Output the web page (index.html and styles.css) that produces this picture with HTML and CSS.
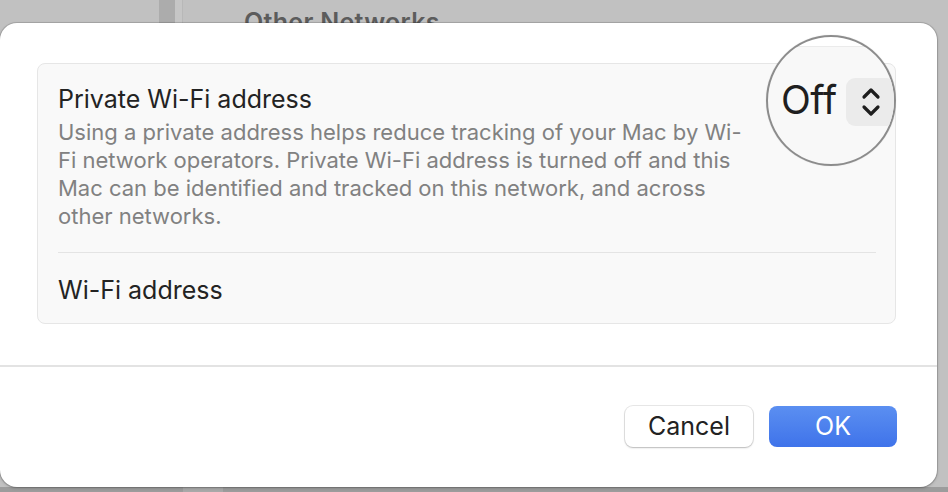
FILE: index.html
```html
<!DOCTYPE html>
<html>
<head>
<meta charset="utf-8">
<link rel="stylesheet" href="styles.css">
</head>
<body>
<div class="desktop">
  <div class="backdrop">
    <div class="sidebar-edge"></div>
    <div class="bg-title">Other Networks</div>
  </div>
  <div class="dialog">
    <div class="dialog-body">
      <div class="card">
        <div class="row row-main">
          <div class="row-text">
            <div class="row-title">Private Wi-Fi address</div>
            <div class="row-desc">Using a private address helps reduce tracking of your Mac by Wi-<br>Fi network operators. Private Wi-Fi address is turned off and this<br>Mac can be identified and tracked on this network, and across<br>other networks.</div>
          </div>
        </div>
        <div class="row row-second">
          <div class="row-title">Wi-Fi address</div>
        </div>
      </div>
    </div>
    <div class="dialog-footer">
      <button class="btn btn-cancel">Cancel</button>
      <button class="btn btn-ok">OK</button>
    </div>
    <div class="magnifier">
      <span class="mag-value">Off</span>
      <span class="mag-stepper">
        <svg width="22" height="34" viewBox="0 0 22 34" fill="none" stroke="#1e1e1e" stroke-width="3.2" stroke-linecap="round" stroke-linejoin="round">
          <path d="M4 12 L11 5 L18 12"/>
          <path d="M4 22 L11 29 L18 22"/>
        </svg>
      </span>
    </div>
  </div>
  <div class="bottom-strip"><div class="strip-light"></div></div>
</div>
</body>
</html>
```

FILE: styles.css
```css
* { box-sizing: border-box; }
html, body {
  margin: 0;
  padding: 0;
  width: 948px;
  height: 492px;
  overflow: hidden;
  background: #c1c1c1;
  font-family: Inter, "Noto Sans", "Liberation Sans", sans-serif;
}
.desktop {
  position: relative;
  width: 948px;
  height: 492px;
  padding-top: 23px;
}
.backdrop {
  position: absolute;
  left: 0;
  top: 0;
  width: 948px;
  height: 492px;
  z-index: 0;
}
.sidebar-edge {
  position: absolute;
  left: 159px;
  top: 0;
  width: 24px;
  height: 492px;
  background: linear-gradient(to right, #acacac 0, #acacac 16px, #c6c6c6 16px, #c6c6c6 23px, #b8b8b8 23px);
}
.bg-title {
  position: absolute;
  left: 244px;
  top: 7px;
  font-size: 25px;
  font-weight: 600;
  color: #5c5c5c;
  letter-spacing: 0.3px;
}
.dialog {
  position: relative;
  z-index: 1;
  width: 937px;
  height: 464px;
  background: #ffffff;
  border-radius: 17px;
  box-shadow: 0 0 0 1px rgba(0,0,0,0.12), 0 1px 3px rgba(0,0,0,0.25);
  display: flex;
  flex-direction: column;
}
.dialog-body {
  padding: 40px 41px 41px 37px;
  border-bottom: 2px solid #e3e3e3;
}
.card {
  background: #f9f9f9;
  border: 1px solid #e6e6e6;
  border-radius: 8px;
  height: 261px;
  padding: 0 19px 0 20px;
}
.row-main {
  padding-top: 21px;
  height: 189px;
  border-bottom: 1px solid #e4e4e4;
}
.row-title {
  font-size: 25px;
  color: #232323;
  line-height: 28px;
}
.row-desc {
  margin-top: 5px;
  font-size: 22px;
  line-height: 28px;
  color: #818181;
}
.row-second {
  padding-top: 23px;
}
.dialog-footer {
  display: flex;
  justify-content: flex-end;
  gap: 16px;
  padding: 39px 40px 0 0;
}
.btn {
  width: 128px;
  height: 41px;
  border-radius: 8px;
  font-family: inherit;
  font-size: 25px;
  border: none;
  padding: 0;
  line-height: 41px;
}
.btn-cancel {
  background: #ffffff;
  color: #222222;
  box-shadow: 0 0 0 1px rgba(0,0,0,0.09), 0 1px 2px rgba(0,0,0,0.2);
}
.btn-ok {
  background: linear-gradient(to bottom, #5b8ff1, #3f73ea);
  color: #ffffff;
}
.magnifier {
  position: absolute;
  left: 766px;
  top: 12px;
  width: 130px;
  height: 131px;
  border-radius: 50%;
  border: 2px solid #8c8c8c;
  background: linear-gradient(to bottom, #ffffff 0, #ffffff 9px, #ebebeb 9px, #ebebeb 10px, #f8f8f8 10px);
  overflow: hidden;
  display: flex;
  align-items: center;
  padding-left: 13px;
  box-shadow: 0 0 1px rgba(0,0,0,0.2);
}
.mag-value {
  font-size: 39px;
  color: #1f1f1f;
  letter-spacing: -0.5px;
  margin-top: -2px;
}
.mag-stepper {
  margin-left: 9px;
  width: 50px;
  height: 48px;
  flex: none;
  background: #ebebeb;
  border-radius: 9px;
  display: flex;
  align-items: center;
  padding-left: 14px;
  margin-top: 2px;
}
.mag-stepper svg { display: block; }
.bottom-strip {
  position: absolute;
  left: 0;
  top: 487px;
  width: 948px;
  height: 5px;
  background: #9c9c9c;
  z-index: 0;
}
.strip-light {
  margin-left: 183px;
  width: 40px;
  height: 5px;
  background: #a9a9a9;
}
```
